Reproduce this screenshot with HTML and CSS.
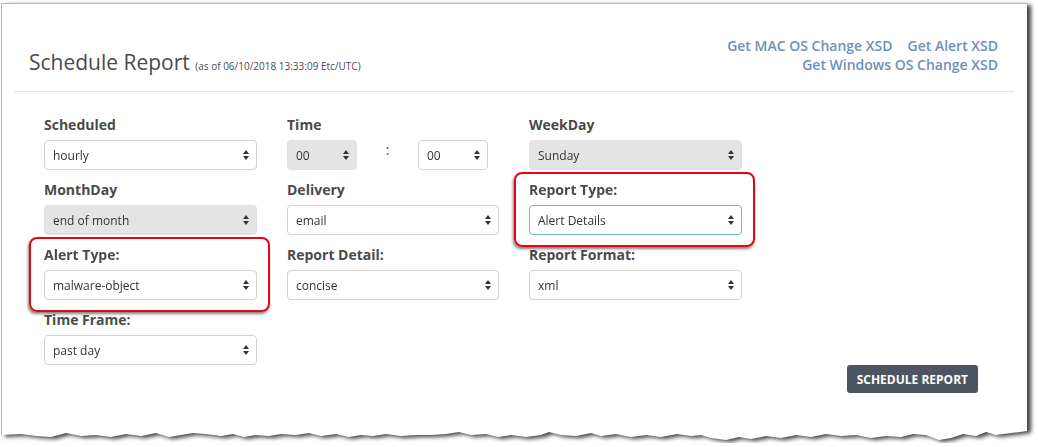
FILE: index.html
```html
<!DOCTYPE html>
<html lang="en">
  <head>
    <meta charset="UTF-8" />
    <meta name="viewport" content="width=device-width, initial-scale=1.0" />
    <title>Schedule Report</title>
    <link rel="stylesheet" href="styles.css">
  </head>
  <body>
    <div class="paper">
      <div class="sheet">
        <div class="panel">
          <!-- Header -->
          <div class="header">
            <h1 class="title">Schedule Report <small>(as of 06/10/2018 13:33:09 Etc/UTC)</small></h1>
            <div class="links">
              <div class="links-row">
                <a href="#">Get MAC OS Change XSD</a>
                <a href="#">Get Alert XSD</a>
              </div>
              <div class="links-row">
                <a href="#">Get Windows OS Change XSD</a>
              </div>
            </div>
          </div>

          <!-- Form -->
          <div class="form">
            <div class="grid">
              <div class="field">
                <label>Scheduled</label>
                <span class="select">
                  <select><option>hourly</option></select>
                  <svg class="arrows" width="6" height="10" viewBox="0 0 6 10"><path d="M3 0L6 4H0z M3 10L0 6H6z"/></svg>
                </span>
              </div>

              <div class="field">
                <label>Time</label>
                <div class="time">
                  <span class="select small">
                    <select disabled><option>00</option></select>
                    <svg class="arrows" width="6" height="10" viewBox="0 0 6 10"><path d="M3 0L6 4H0z M3 10L0 6H6z"/></svg>
                  </span>
                  <span class="colon">:</span>
                  <span class="select small">
                    <select><option>00</option></select>
                    <svg class="arrows" width="6" height="10" viewBox="0 0 6 10"><path d="M3 0L6 4H0z M3 10L0 6H6z"/></svg>
                  </span>
                </div>
              </div>

              <div class="field">
                <label>WeekDay</label>
                <span class="select">
                  <select disabled><option>Sunday</option></select>
                  <svg class="arrows" width="6" height="10" viewBox="0 0 6 10"><path d="M3 0L6 4H0z M3 10L0 6H6z"/></svg>
                </span>
              </div>

              <div class="field">
                <label>MonthDay</label>
                <span class="select">
                  <select disabled><option>end of month</option></select>
                  <svg class="arrows" width="6" height="10" viewBox="0 0 6 10"><path d="M3 0L6 4H0z M3 10L0 6H6z"/></svg>
                </span>
              </div>

              <div class="field">
                <label>Delivery</label>
                <span class="select">
                  <select><option>email</option></select>
                  <svg class="arrows" width="6" height="10" viewBox="0 0 6 10"><path d="M3 0L6 4H0z M3 10L0 6H6z"/></svg>
                </span>
              </div>

              <div class="field marked">
                <label>Report Type:</label>
                <span class="select">
                  <select class="focus"><option>Alert Details</option></select>
                  <svg class="arrows" width="6" height="10" viewBox="0 0 6 10"><path d="M3 0L6 4H0z M3 10L0 6H6z"/></svg>
                </span>
              </div>

              <div class="field marked">
                <label>Alert Type:</label>
                <span class="select">
                  <select><option>malware-object</option></select>
                  <svg class="arrows" width="6" height="10" viewBox="0 0 6 10"><path d="M3 0L6 4H0z M3 10L0 6H6z"/></svg>
                </span>
              </div>

              <div class="field">
                <label>Report Detail:</label>
                <span class="select">
                  <select><option>concise</option></select>
                  <svg class="arrows" width="6" height="10" viewBox="0 0 6 10"><path d="M3 0L6 4H0z M3 10L0 6H6z"/></svg>
                </span>
              </div>

              <div class="field">
                <label>Report Format:</label>
                <span class="select">
                  <select><option>xml</option></select>
                  <svg class="arrows" width="6" height="10" viewBox="0 0 6 10"><path d="M3 0L6 4H0z M3 10L0 6H6z"/></svg>
                </span>
              </div>

              <div class="field">
                <label>Time Frame:</label>
                <span class="select">
                  <select><option>past day</option></select>
                  <svg class="arrows" width="6" height="10" viewBox="0 0 6 10"><path d="M3 0L6 4H0z M3 10L0 6H6z"/></svg>
                </span>
              </div>
            </div>

            <div class="actions">
              <button>Schedule Report</button>
            </div>
          </div>
        </div>
      </div>
    </div>
  </body>
</html>
```

FILE: styles.css
```css
* {
  box-sizing: border-box;
}

body {
  margin: 0;
  background: #fff;
  font-family: "Open Sans", "Liberation Sans", Arial, sans-serif;
  color: #4a4a4a;
}

/* torn paper screenshot frame */
.paper {
  width: 1036px;
  filter: drop-shadow(4px 2px 2px rgba(0, 0, 0, 0.75));
}

.sheet {
  margin: 3px 0 0 1px;
  width: 1026px;
  height: 440px;
  background: #fff;
  border-top: 1px solid #b5b5b5;
  border-left: 1px solid #b5b5b5;
  clip-path: polygon(
    0 0, 100% 0, 1026px 428px, 1010px 430px, 995px 432px, 985px 429px,
    975px 433px, 962px 431px, 950px 435px, 938px 437px, 925px 432px,
    912px 431px, 900px 434px, 885px 433px, 870px 435px, 855px 432px,
    840px 433px, 825px 431px, 810px 434px, 795px 432px, 780px 435px,
    765px 433px, 750px 436px, 738px 434px, 725px 437px, 710px 435px,
    700px 432px, 690px 433px, 676px 431px, 660px 434px, 645px 432px,
    630px 434px, 615px 431px, 600px 433px, 590px 430px, 575px 433px,
    560px 432px, 548px 429px, 540px 432px, 525px 434px, 510px 432px,
    497px 434px, 485px 431px, 470px 432px, 458px 429px, 445px 431px,
    430px 432px, 415px 432px, 400px 433px, 385px 431px, 372px 433px,
    360px 432px, 348px 434px, 335px 431px, 320px 433px, 308px 430px,
    295px 432px, 280px 431px, 268px 433px, 255px 432px, 243px 434px,
    232px 431px, 220px 433px, 205px 431px, 192px 430px, 180px 432px,
    168px 434px, 155px 430px, 140px 433px, 125px 431px, 110px 434px,
    95px 432px, 80px 433px, 65px 430px, 50px 434px, 35px 433px,
    20px 431px, 0 432px
  );
}

.panel {
  padding: 0 13px 0 12px;
}

/* header */
.header {
  display: flex;
  justify-content: space-between;
  align-items: flex-end;
  padding: 32px 16px 17px 15px;
  border-bottom: 1px solid #e8e8e8;
}

.title {
  margin: 0 0 -3px;
  font-size: 21px;
  font-weight: 400;
  line-height: 22px;
  color: #4a4a4a;
}

.title small {
  font-size: 10px;
}

.links {
  font-size: 14px;
  font-weight: 600;
  line-height: 19px;
}

.links-row {
  display: flex;
  justify-content: flex-end;
  gap: 15px;
}

.links a {
  color: #6d8fbb;
  text-decoration: none;
}

/* form */
.form {
  padding: 23px 0 0 30px;
}

.grid {
  display: grid;
  grid-template-columns: 213px 212px 213px;
  column-gap: 30px;
  row-gap: 10px;
}

.field label {
  display: block;
  font-size: 14px;
  font-weight: 700;
  line-height: 20px;
  margin-bottom: 5px;
  color: #4a4a4a;
}

.field.marked {
  position: relative;
}

.field.marked::after {
  content: "";
  position: absolute;
  top: -8px;
  right: -13px;
  bottom: -12px;
  left: -15px;
  border: 2px solid #e30613;
  border-radius: 8px;
  box-shadow: -1px 2px 3px rgba(0, 0, 0, 0.5);
  pointer-events: none;
}

.select {
  position: relative;
  display: block;
}

.select select {
  display: block;
  width: 100%;
  height: 30px;
  padding: 0 20px 0 8px;
  border: 1px solid #d2d2d2;
  border-radius: 4px;
  background: #fff;
  font-family: inherit;
  font-size: 12px;
  color: #333;
  appearance: none;
  -webkit-appearance: none;
}

.select select:disabled {
  background: #e4e4e4;
  border-color: #e0e0e0;
  color: #333;
  opacity: 1;
}

.select select.focus {
  border-color: #72b3e3;
}

.select .arrows {
  position: absolute;
  right: 8px;
  top: 10px;
  fill: #333;
}

.time {
  display: flex;
}

.select.small {
  width: 70px;
}

.colon {
  width: 61px;
  text-align: center;
  font-size: 14px;
  line-height: 20px;
  color: #555;
}

.actions {
  display: flex;
  justify-content: flex-end;
  padding-right: 36px;
}

button {
  height: 28px;
  padding: 0 10px;
  background: #4d5560;
  color: #fff;
  border: none;
  border-radius: 3px;
  font-family: inherit;
  font-size: 12px;
  font-weight: 700;
  text-transform: uppercase;
  cursor: pointer;
}
```
